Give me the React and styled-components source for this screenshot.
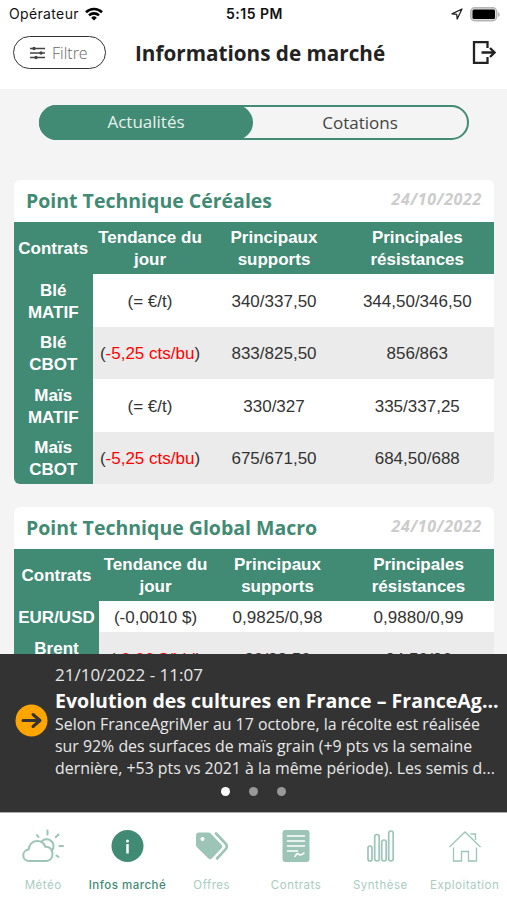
import React from 'react';
import styled, { createGlobalStyle } from 'styled-components';

const GlobalStyle = createGlobalStyle`
  * {
    box-sizing: border-box;
  }
  body {
    margin: 0;
    overflow: hidden;
    background: #f4f4f4;
    font-family: 'Open Sans', 'Noto Sans', sans-serif;
  }
`;

const Screen = styled.div`
  width: 507px;
  height: 900px;
  display: flex;
  flex-direction: column;
  overflow: hidden;
  color: #333333;
`;
const StatusBar = styled.div`
  height: 28px;
  flex: none;
  display: grid;
  grid-template-columns: 1fr auto 1fr;
  align-items: center;
  padding: 0 7px 0 9px;
  background: #ffffff;
  color: #111111;
  font-family: Inter, sans-serif;
  font-size: 14px;
  line-height: 28px;
`;
const StatusGroup = styled.div`
  display: flex;
  align-items: center;
  justify-content: ${({ $end }) => ($end ? 'flex-end' : 'flex-start')};
  gap: ${({ $end }) => ($end ? '7px' : '6px')};
`;
const Carrier = styled.span`
  font-size: 14px;
  letter-spacing: 0.35px;
`;
const Clock = styled.span`
  font-weight: 600;
  letter-spacing: 0.5px;
`;
const Header = styled.header`
  height: 61px;
  flex: none;
  display: flex;
  align-items: flex-start;
  padding: 8px 11px 0 13px;
  background: #ffffff;
`;
const FilterButton = styled.button`
  width: 93px;
  height: 33px;
  display: flex;
  align-items: center;
  gap: 7px;
  padding: 0 0 0 16px;
  border: 1.5px solid #333333;
  border-radius: 17px;
  background: #ffffff;
  color: #666666;
  font-family: inherit;
  font-weight: 300;
  font-size: 16px;
`;
const PageTitle = styled.h1`
  flex: 1;
  margin: 0 0 0 29px;
  font-weight: 700;
  font-size: 20.7px;
  line-height: 34px;
  color: #222222;
  white-space: nowrap;
`;
const ExitIcon = styled.svg`
  margin-top: 4px;
`;
const Content = styled.main`
  flex: 1;
  min-height: 0;
  overflow: hidden;
  padding: 16px 13px 0 14px;
`;
const Switch = styled.div`
  width: 430px;
  height: 35px;
  display: flex;
  margin: 0 0 40px 25px;
  border: 2px solid #418a73;
  border-radius: 18px;
`;
const SwitchItem = styled.div`
  flex: 1;
  margin: ${({ $active }) => ($active ? '-2px 0 -2px -2px' : '0')};
  border-radius: 18px;
  background: ${({ $active }) => ($active ? '#418a73' : 'transparent')};
  color: ${({ $active }) => ($active ? '#e6f2ee' : '#444444')};
  font-size: 17px;
  line-height: ${({ $active }) => ($active ? '34px' : '32px')};
  text-align: center;
`;
const Card = styled.section`
  width: 480px;
  margin-bottom: 23px;
  border-radius: 6px;
  background: #ffffff;
  overflow: hidden;
`;
const CardHeader = styled.div`
  height: 41.5px;
  display: flex;
  justify-content: space-between;
  padding: 0 12px;
`;
const CardTitle = styled.h2`
  margin: 0;
  font-weight: 700;
  font-size: 19.5px;
  line-height: 42px;
  color: #418a73;
`;
const CardDate = styled.span`
  font-weight: 700;
  font-style: italic;
  font-size: 16px;
  letter-spacing: 0.65px;
  line-height: 39px;
  color: #cccccc;
`;
const Row = styled.div`
  display: grid;
  grid-template-columns: ${({ $columns }) => $columns};
  height: ${({ $height }) => $height || 52.5}px;
  background: ${({ $shaded }) => ($shaded ? '#ebebeb' : '#ffffff')};
  font-family: 'Liberation Sans', Arial, sans-serif;
  font-size: 17px;
  line-height: 21.8px;
`;
const Cell = styled.div`
  display: flex;
  align-items: center;
  justify-content: center;
  text-align: center;
  padding-top: 3px;
  white-space: pre-line;
  background: ${({ $head }) => ($head ? '#418a73' : 'transparent')};
  color: ${({ $head }) => ($head ? '#ffffff' : '#333333')};
  font-weight: ${({ $head }) => ($head ? 700 : 400)};
`;
const Down = styled.span`
  color: #ff0000;
`;
const NewsBanner = styled.section`
  height: 158px;
  flex: none;
  display: flex;
  flex-direction: column;
  background: #333333;
  color: #e8e8e8;
`;
const NewsBody = styled.div`
  height: 127px;
  display: flex;
  align-items: center;
  padding: 0 8px 0 15px;
  gap: 7px;
`;
const NewsIcon = styled.svg`
  flex: none;
  margin-top: 6px;
`;
const NewsText = styled.div`
  flex: 1;
  height: 127px;
  padding-top: 9px;
  white-space: nowrap;
`;
const NewsDate = styled.div`
  font-size: 17px;
  line-height: 24px;
`;
const NewsTitle = styled.div`
  font-weight: 700;
  font-size: 19.55px;
  line-height: 27px;
  color: #ffffff;
`;
const NewsLine = styled.div`
  font-size: 15.9px;
  line-height: 21.8px;
`;
const Dots = styled.div`
  display: flex;
  justify-content: center;
  gap: 19px;
  padding-top: 6px;
`;
const Dot = styled.span`
  width: 9px;
  height: 9px;
  border-radius: 50%;
  background: ${({ $active }) => ($active ? '#ffffff' : '#999999')};
`;
const TabBar = styled.nav`
  height: 88px;
  flex: none;
  display: grid;
  grid-template-columns: repeat(6, 84.3px);
  padding-left: 1px;
  border-top: 1px solid #aaaaaa;
  background: #ffffff;
`;
const Tab = styled.div`
  display: flex;
  flex-direction: column;
  align-items: center;
  padding-top: 12px;
  font-family: Inter, sans-serif;
  font-size: 11.5px;
  line-height: 16px;
  letter-spacing: 0.5px;
  white-space: nowrap;
  font-weight: ${({ $active }) => ($active ? 500 : 400)};
  color: ${({ $active }) => ($active ? '#418a73' : '#a9ccc0')};
`;
const TabIcon = styled.svg`
  margin-bottom: 11px;
  color: ${({ $active }) => ($active ? '#418a73' : '#9cc5b7')};
`;

const icons = {
  weather: (
    <g stroke="currentColor" strokeWidth="2" strokeLinecap="round" strokeLinejoin="round">
      <path d="M7.500 36c-4 0-6.200-2.500-6.200-5.600 0-3.300 2.400-5.600 5.300-5.800C7 19.500 10.500 16 15 16c4 0 7 2.300 8.300 5.800 4.200-.3 7.200 2.700 7.200 6.700 0 4.500-2.500 7.500-6 7.500z" />
      <path d="M19.500 16.600c2-2.600 6-3.300 9-1.200 3.700 2.500 4.200 7.500 1 10.500M25.500 5.500v4M15 10l1.500 2M36.500 9.500l-2.800 2.800M37.500 21h3.500M34.500 30.500l2 1.500" />
    </g>
  ),
  info: (
    <g>
      <circle cx="21.500" cy="21" r="16" fill="currentColor" />
      <circle cx="21.500" cy="16" r="1.500" fill="#fff" />
      <path d="M21.500 19v9.500" stroke="#fff" strokeWidth="2.500" />
    </g>
  ),
  offers: (
    <g>
      <path d="M5 10.500a3 3 0 0 1 3-3h9a4 4 0 0 1 3 1.200l10.500 11c1 1.200 1 2.500 0 3.600l-9.500 10c-1.300 1.200-2.500 1.200-3.800 0L6.200 22.500A4 4 0 0 1 5 19.500z" fill="currentColor" />
      <circle cx="11.500" cy="14" r="2" fill="#fff" />
      <path d="M25 8.500l9.500 10c1.700 1.800 1.700 4 0 5.800L26 33.500" stroke="currentColor" strokeWidth="2.600" strokeLinecap="round" />
    </g>
  ),
  contracts: (
    <g>
      <rect x="7.500" y="5" width="27" height="32" rx="3" fill="currentColor" />
      <path d="M12.500 11h17M12.500 16h17M12.500 21h17M12.500 26h10M20 31.500c2-4 3-3 4-2s2 1 5-1.500" stroke="#fff" strokeWidth="1.600" strokeLinecap="round" />
    </g>
  ),
  summary: (
    <g stroke="currentColor" strokeWidth="1.700">
      <rect x="9" y="21" width="4" height="15" rx="2" />
      <rect x="15.700" y="9.500" width="4.500" height="26.500" rx="2.200" />
      <rect x="22.700" y="15" width="4.500" height="21" rx="2.200" />
      <rect x="29.700" y="6" width="4.500" height="30" rx="2.200" />
    </g>
  ),
  farm: (
    <g stroke="currentColor" strokeWidth="1.300">
      <path d="M5.500 22L21 7l15.500 15M9.500 22.500V36h8v-9.500h7V36h8V22.500M26.500 9h5v6" />
    </g>
  ),
};

const tabs = [
  { icon: 'weather', label: 'Météo' },
  { icon: 'info', label: 'Infos marché', active: true },
  { icon: 'offers', label: 'Offres' },
  { icon: 'contracts', label: 'Contrats' },
  { icon: 'summary', label: 'Synthèse' },
  { icon: 'farm', label: 'Exploitation' },
];

const headings = ['Contrats', 'Tendance du\njour', 'Principaux\nsupports', 'Principales\nrésistances'];

const cards = [
  {
    title: 'Point Technique Céréales',
    date: '24/10/2022',
    columns: '78.5px 115px 133px 1fr',
    rows: [
      { name: 'Blé\nMATIF', trend: '= €/t', support: '340/337,50', resistance: '344,50/346,50' },
      { name: 'Blé\nCBOT', trend: '-5,25 cts/bu', down: true, support: '833/825,50', resistance: '856/863' },
      { name: 'Maïs\nMATIF', trend: '= €/t', support: '330/327', resistance: '335/337,25' },
      { name: 'Maïs\nCBOT', trend: '-5,25 cts/bu', down: true, support: '675/671,50', resistance: '684,50/688' },
    ],
  },
  {
    title: 'Point Technique Global Macro',
    date: '24/10/2022',
    columns: '85px 113px 131px 1fr',
    rows: [
      { name: 'EUR/USD', trend: '-0,0010 $', support: '0,9825/0,98', resistance: '0,9880/0,99', height: 31 },
      { name: 'Brent\nICE', trend: '-0,06 $/bbl', down: true, support: '90/88,50', resistance: '94,50/96' },
    ],
  },
];

function MarketCard({ title, date, columns, rows }) {
  return (
    <Card>
      <CardHeader>
        <CardTitle>{title}</CardTitle>
        <CardDate>{date}</CardDate>
      </CardHeader>
      <Row $columns={columns}>
        {headings.map((heading) => (
          <Cell $head key={heading}>{heading}</Cell>
        ))}
      </Row>
      {rows.map((row, index) => (
        <Row key={row.name} $columns={columns} $height={row.height} $shaded={index % 2 === 1}>
          <Cell $head>{row.name}</Cell>
          <Cell>
            <span>({row.down ? <Down>{row.trend}</Down> : row.trend})</span>
          </Cell>
          <Cell>{row.support}</Cell>
          <Cell>{row.resistance}</Cell>
        </Row>
      ))}
    </Card>
  );
}

function App() {
  return (
    <Screen>
      <GlobalStyle />
      <StatusBar>
        <StatusGroup>
          <Carrier>Opérateur</Carrier>
          <svg width="18" height="14" viewBox="0 0 18 14" fill="none" stroke="#000" strokeWidth="2.600">
            <path d="M1 5.200a11.500 11.500 0 0 1 16 0M4 8.400a7.200 7.200 0 0 1 10 0" />
            <path d="M9 13.500L6.200 10.700a4 4 0 0 1 5.600 0z" fill="#000" stroke="none" />
          </svg>
        </StatusGroup>
        <Clock>5:15 PM</Clock>
        <StatusGroup $end>
          <svg width="12" height="12" viewBox="0 0 12 12" fill="none" stroke="#222" strokeWidth="1.300" strokeLinejoin="round">
            <path d="M11 1L1 5.800l4.700.5L6.200 11z" />
          </svg>
          <svg width="30" height="15" viewBox="0 0 30 15">
            <rect x="0.700" y="0.700" width="26" height="13" rx="4" fill="#ddd" stroke="#b5b5b5" strokeWidth="1.400" />
            <rect x="2.500" y="2.500" width="22.500" height="9.500" rx="1.500" fill="#000" />
            <path d="M28 5c2.200.8 2.200 4.200 0 5z" fill="#b5b5b5" />
          </svg>
        </StatusGroup>
      </StatusBar>
      <Header>
        <FilterButton>
          <svg width="15" height="14" viewBox="0 0 15 14" stroke="#444" strokeWidth="1.300">
            <path d="M0 2.500h15M0 7h15M0 11.500h15" />
            <g fill="#444" stroke="none">
              <circle cx="4" cy="2.500" r="1.700" />
              <circle cx="11" cy="7" r="1.700" />
              <circle cx="6" cy="11.500" r="1.700" />
            </g>
          </svg>
          Filtre
        </FilterButton>
        <PageTitle>Informations de marché</PageTitle>
        <ExitIcon width="24" height="25" viewBox="0 0 24 25" fill="none" stroke="#222" strokeWidth="2.300">
          <path d="M15.500 8V2.200H2v20.600h13.500V17M9.500 12.500h12M18 8l4.500 4.500L18 17" />
        </ExitIcon>
      </Header>
      <Content>
        <Switch>
          <SwitchItem $active>Actualités</SwitchItem>
          <SwitchItem>Cotations</SwitchItem>
        </Switch>
        {cards.map((card) => (
          <MarketCard key={card.title} {...card} />
        ))}
      </Content>
      <NewsBanner>
        <NewsBody>
          <NewsIcon width="33" height="33" viewBox="0 0 33 33" fill="none">
            <circle cx="16.500" cy="16.500" r="16" fill="#ffa500" />
            <path d="M8 16.500h16M18 10.500l7 6-7 6" stroke="#333" strokeWidth="3" strokeLinecap="round" strokeLinejoin="round" />
          </NewsIcon>
          <NewsText>
            <NewsDate>21/10/2022 - 11:07</NewsDate>
            <NewsTitle>Evolution des cultures en France – FranceAg...</NewsTitle>
            <NewsLine>Selon FranceAgriMer au 17 octobre, la récolte est réalisée</NewsLine>
            <NewsLine>sur 92% des surfaces de maïs grain (+9 pts vs la semaine</NewsLine>
            <NewsLine>dernière, +53 pts vs 2021 à la même période). Les semis d...</NewsLine>
          </NewsText>
        </NewsBody>
        <Dots>
          <Dot $active />
          <Dot />
          <Dot />
        </Dots>
      </NewsBanner>
      <TabBar>
        {tabs.map(({ icon, label, active }) => (
          <Tab key={label} $active={active}>
            <TabIcon $active={active} width="42" height="41" viewBox="0 0 42 41" fill="none" overflow="visible">
              {icons[icon]}
            </TabIcon>
            {label}
          </Tab>
        ))}
      </TabBar>
    </Screen>
  );
}

export default App;
